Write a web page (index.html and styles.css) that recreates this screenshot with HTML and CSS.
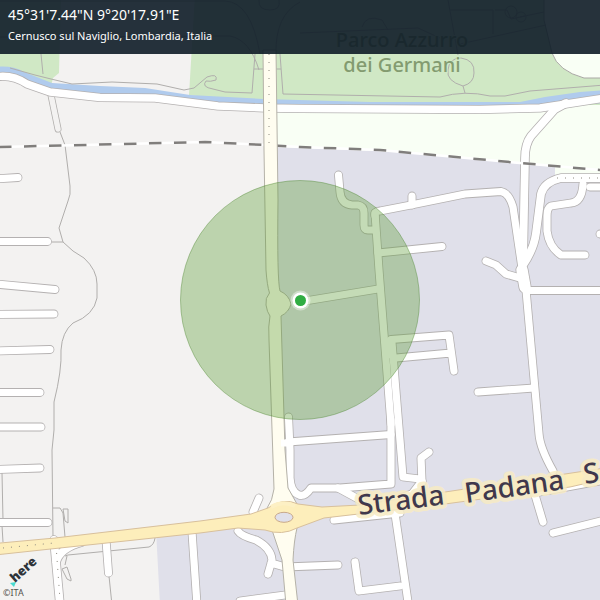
FILE: index.html
```html
<!DOCTYPE html>
<html lang="it">
<head>
<meta charset="utf-8">
<meta name="viewport" content="width=device-width, initial-scale=1">
<title>Cernusco sul Naviglio</title>
<link rel="stylesheet" href="styles.css">
</head>
<body>
<main class="map">
<svg class="map-canvas" viewBox="0 0 600 600" role="img" aria-label="Cernusco sul Naviglio">
  <defs>
    <!-- local streets -->
    <g id="streets">
      <path d="M-5 179L18 177.500M-5 241.500H47.500M-5 284L55 289.500M-5 314.500L54 314M-5 351L50 349.500M-5 392.500H40M-5 427H41M-5 469.500L40 468M-5 522.500H48"/>
      <path d="M338.500 175L340 192Q341 204 352 205L358 205Q364 206 364 213V225Q364 230 368 230H375"/>
      <path d="M375 216Q374 211 380 211L411 205L465 194L501 191.500Q509 193 513 207L522 268L524 288"/>
      <path d="M412 205V196M378 253L442 246.500M305 301L378 289"/>
      <path d="M375 213L379 270L391 424"/>
      <path d="M391 355V339.500L449 335L454 371M396 358L451 353"/>
      <path d="M392 343L403 477L420 479L422 482M422 482L421 458L429 452"/>
      <path d="M422 481L412 494L395 500"/>
      <path d="M288.500 417L290 450V478Q291 492 299 495Q305 497 311 488H340L391 484V420"/>
      <path d="M288 442L391 434.500M338 488L362 501M334 520L400 513"/>
      <path d="M253 512L259 498M238 531Q241 536 256 540Q271 548 272 560L268 574M271 563L285 567L338 565"/>
      <path d="M355 562L359 591L400 586M240 601L285 595"/>
      <path d="M393 500L408 602M192 532L197 605M106 540L108.500 573"/>
      <path d="M526 290.500H605M486 261L496 265L506 274L520 278M478 392L534 388"/>
      <path d="M526 290L539 434Q540 448 553 471M535 495L543 522M540 492L605 480M553 533L605 520"/>
      <path d="M583 184Q582 202 571 203L551 206Q547 208 547 216V231Q549 247 561 255H585M590 187H605M600 234H608"/>
    </g>
    <!-- wider streets -->
    <g id="collectors">
      <path d="M523 264L525 158Q525 144 531 136L555 109L566 103M523 265Q534 249 536 233L541 194Q544 182 561 178H605"/>
      <path d="M54 540L60 605M56 562Q60 548 82 542"/>
    </g>
    <path id="canal-road" d="M-5 77Q12 74 27 84L50 92L100 97.500L155 98L218 106L265 108L300 108.500L480 109.500L540 108L605 98"/>
    <path id="avenue" d="M263 50L264 150L266 270Q267 285 269.500 293Q265 298 266 305Q267 312 270 316Q268 326 269 340L274 489Q273 500 266 510L272 530L282 560L286 605H298L293 560Q294 540 297 528V504L288 488L285 450L281 316Q289 312 291 304Q289 295 280 291Q277 280 278 200L276 50Z"/>
    <path id="highway" d="M-5 543.500L55 538L200 521L251 514L268 508Q283 497 298 504L322 507L360 505L445 492L605 468V479L570 487L445 504L324 518L297 528Q282 536 265 530L238 528L200 533L60 548L-5 555Z"/>
  </defs>

  <rect width="600" height="600" class="land"/>
  <path class="zone" d="M272 146L400 150L555 165L605 172V605H160L156 530L280 510Z"/>
  <path class="meadow" d="M270 100H605V178H555V167L400 152L275 147Z"/>
  <path class="park" d="M-5 -5H61L59 73L53 78L50 90L-5 75ZM195 -5H605V105L270 106L189 95Z"/>
  <path class="meadow edge" d="M544 -5V20L552 53Q558 71 584 78H605V-5Z"/>
  <path class="water" d="M-5 67Q12 65 24 72L52 83L100 86L145 88L190 95L263 99L370 102L520 102L545 97L580 92L605 90V103L520 108L263 106L150 98L90 97L50 92L20 78L-5 75Z"/>
  <g class="paths">
    <path d="M41 54L43 74M10 68L35 75L51 79L72 84L112 82L157 84L184 90L194 88L207 77Q218 73 216 80Q210 82 206 81Q201 87 213 89L225 92L252 93L255 54M254 69H263M276 69L281 69M280 54L283 94L440 97Q465 90 490 96H505L530 91L605 85"/>
    <path d="M463 86Q446 81 448 70Q449 58 461 58Q475 60 474 73Q474 83 463 86ZL465 93"/>
    <path d="M60 132L65 145L70 186Q71 195 68 201L59 228L63 242L73 251L84 258Q97 270 97 284V298Q94 315 73 323Q62 332 61 350Q62 370 54 402V430L52 450L53 537M52 242H63M2 473L3 520"/>
    <path d="M53 508H60L63 513L65 537M63 509H68V523L65 521ZM67 556L65 565M62 569L67 567L71 579V581L67 579ZM65 556L68 555L149 547Q154 545 155 538M109 576L112 605M2 526L3 542"/>
    <path d="M0 37L230 36Q250 40 259 70M0 1H225Q251 2 260 54M300 2Q275 15 276 54M259 0Q258 10 270 10Q281 10 279 0M300 33L418 28L440 38M448 0L458 55M450 10H493V34M544 12L520 17M495 10H507L511 19L525 16M460 44L546 25M362 27Q366 14 382 20L388 30"/>
    <circle cx="511" cy="12" r="6"/><circle cx="521" cy="17" r="5"/>
  </g>
  <path class="track-edge" d="M51 95L58 129"/><path class="track" d="M51 95L58 129"/>

  <use href="#canal-road" class="casing canal"/>
  <use href="#streets" class="casing street"/>
  <use href="#collectors" class="casing collector"/>
  <path class="casing junction" d="M522 270L525 287"/>
  <use href="#canal-road" class="surface canal"/>
  <use href="#streets" class="surface street"/>
  <use href="#collectors" class="surface collector"/>
  <path class="surface junction" d="M522 270L525 287"/>
  <path class="lane-dots" d="M557 178H600M56 545L60 600"/>

  <path class="rail-base" d="M0 147L205 142L265 145L300 147L380 150L520 163L600 170"/>
  <path class="rail" d="M0 147L205 142L265 145L300 147L380 150L520 163L600 170"/>

  <use href="#avenue" class="avenue-edge"/>
  <path class="join" d="M281 443H292"/>
  <use href="#highway" class="highway"/>
  <path class="soft-join" d="M271 507Q283 500 295 506"/>
  <ellipse class="island" cx="284" cy="517.300" rx="9" ry="5"/>
  <path class="lane-dots" d="M269 54V146M3 548L54 543"/>

  <text class="park-label" x="402" y="47">Parco Azzurro</text>
  <text class="park-label" x="402" y="72">dei Germani</text>
  <text class="road-label" transform="translate(359 515) rotate(-7)">Strada</text>
  <text class="road-label" transform="translate(466 503) rotate(-8)">Padana</text>
  <text class="road-label" transform="translate(585 484) rotate(-9)">S</text>

  <circle class="area" cx="300" cy="300" r="119.500"/>
  <circle class="pin-halo" cx="300.500" cy="300.500" r="10"/>
  <circle class="pin-ring" cx="300.500" cy="300.500" r="8"/>
  <circle class="pin" cx="300.500" cy="300.500" r="5.500"/>

  <path class="here-mark" d="M10 583L16 582L14 587Z"/>
  <text class="here-label" transform="translate(15 583) rotate(-42)">here</text>
  <text class="copyright" x="3" y="596">©ITA</text>
</svg>
<header class="caption">
  <h1 class="coordinates">45°31'7.44"N 9°20'17.91"E</h1>
  <p class="place">Cernusco sul Naviglio, Lombardia, Italia</p>
</header>
</main>
</body>
</html>
```
FILE: styles.css
```css
* { box-sizing: border-box; }

body {
  margin: 0;
  background: #f3f2f1;
  font-family: "Noto Sans", "Open Sans", sans-serif;
}

.map { position: relative; overflow: hidden; }

.map-canvas { display: block; width: 100%; height: auto; }

.caption {
  position: absolute;
  top: 0;
  left: 0;
  right: 0;
  padding: 5px 8px 9px;
  background: rgba(14, 28, 39, 0.9);
  color: #fff;
}

.coordinates {
  margin: 0;
  font-size: 14px;
  font-weight: 400;
  line-height: 20px;
}

.place {
  margin: 2px 0 0;
  font-size: 11px;
  line-height: 18px;
}

.land { fill: #f3f2f1; }
.zone { fill: #e0e0ea; }
.meadow { fill: #f9fff5; }
.park { fill: #d0e8c5; }
.water { fill: #b0cbed; }
.edge { stroke: #aaa8a5; }

.paths { fill: none; stroke: #b0aeac; stroke-width: 1; }
.track-edge, .track { fill: none; stroke-linecap: round; }
.track-edge { stroke: #b0aeac; stroke-width: 7; }
.track { stroke: #f3f2f1; stroke-width: 5.5; }

.casing, .surface {
  fill: none;
  stroke-linecap: round;
  stroke-linejoin: round;
}
.casing { stroke: #b4b1b1; }
.surface { stroke: #fff; }
.casing.street { stroke-width: 8.8; }
.surface.street { stroke-width: 7.2; }
.casing.collector { stroke-width: 9.4; }
.surface.collector { stroke-width: 7.8; }
.casing.canal { stroke-width: 9; }
.surface.canal { stroke-width: 7.4; }
.casing.junction { stroke-width: 13; }
.surface.junction { stroke-width: 11.4; }

.rail-base, .rail { fill: none; stroke-width: 2.5; }
.rail-base { stroke: #fff; }
.rail { stroke: #807e7c; stroke-dasharray: 12.5 12.5; stroke-dashoffset: 1; }

.avenue-edge { fill: #fffdf0; stroke: #b5b2a8; }
.join { fill: none; stroke: #fff; stroke-width: 7; }
.highway { fill: #fdeebb; stroke: #d8c09c; }
.soft-join { fill: none; stroke: #fdf0c4; stroke-width: 4; }
.island { fill: #e0e0ea; stroke: #c9a98a; }

.lane-dots {
  fill: none;
  stroke: #8d8a80;
  stroke-width: 1;
  stroke-dasharray: 1 7;
}

.park-label {
  fill: #839b70;
  stroke: #d0e8c5;
  stroke-width: 2;
  paint-order: stroke;
  font-size: 20px;
  font-weight: 500;
  text-anchor: middle;
}

.road-label {
  fill: #40384c;
  stroke: #f7ebc4;
  stroke-opacity: 0.85;
  stroke-width: 8;
  stroke-linejoin: round;
  paint-order: stroke;
  font-size: 28px;
  font-weight: 500;
}

.area {
  fill: rgba(92, 156, 54, 0.36);
  stroke: rgba(70, 130, 40, 0.4);
}
.pin-halo { fill: rgba(255, 255, 255, 0.4); }
.pin-ring { fill: #fff; }
.pin { fill: #30ad43; }

.here-mark { fill: #48dad0; }
.here-label { fill: #2d3339; font-size: 13px; font-weight: 900; }
.copyright { fill: #55524f; font-size: 9px; }
```
